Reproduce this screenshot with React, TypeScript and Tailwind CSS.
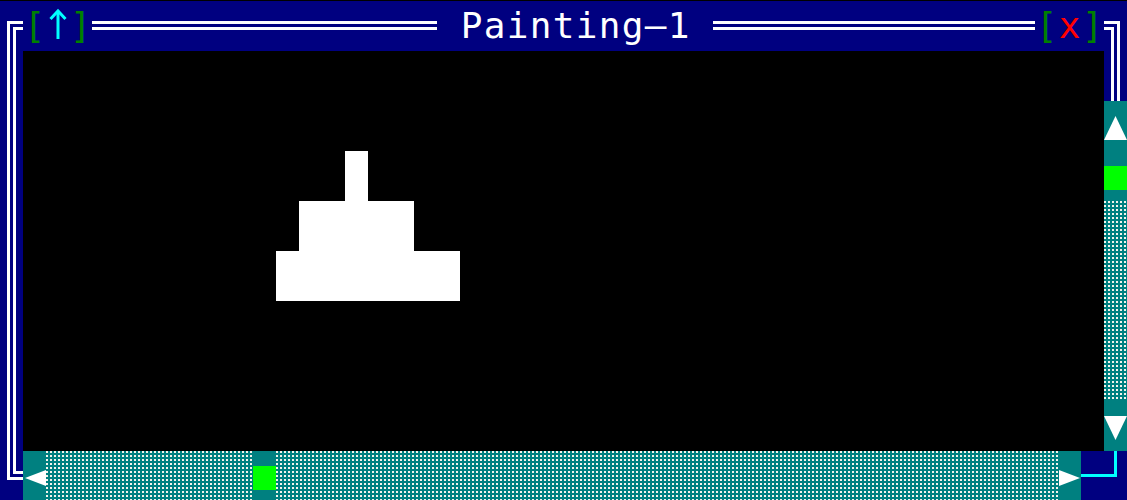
import React from "react";

const NAVY = "bg-[#000080]";

function Shade() {
  return (
    <div className="h-full w-full bg-[#f4f4ec] bg-[linear-gradient(to_bottom,transparent_2px,#008080_2px),linear-gradient(to_right,transparent_2px,#008080_2px)] bg-[size:4px_4px]" />
  );
}

function Ch({ c, color }: { c: string; color: string }) {
  return <div className={`text-center ${color}`}>{c}</div>;
}

function DoubleH({ span }: { span: string }) {
  return (
    <div className={span}>
      <div className="mt-[20px] h-[9px] border-y-[3px] border-white" />
    </div>
  );
}

function Glyph({ children, className = "" }: { children: React.ReactNode; className?: string }) {
  return (
    <svg width="23" height="50" viewBox="0 0 23 50" className={`block ${className}`}>
      {children}
    </svg>
  );
}

export default function App() {
  const title = "Painting—1".split("");
  return (
    <div className="h-[500px] w-[1127px] overflow-hidden bg-black pt-px">
      <div
        className={`grid grid-cols-[repeat(49,23px)] grid-rows-[repeat(10,50px)] ${NAVY} font-['DejaVu_Sans_Mono',monospace] text-[36px] leading-[50px] text-white`}
      >
        {/* Row 1: title bar */}
        <Glyph>
          <rect x="7" y="20" width="3" height="30" fill="#fff" />
          <rect x="7" y="20" width="16" height="3" fill="#fff" />
          <rect x="13" y="26" width="3" height="24" fill="#fff" />
          <rect x="13" y="26" width="10" height="3" fill="#fff" />
        </Glyph>
        <Ch c="[" color="text-[#008000]" />
        <div>
          <Glyph>
            <rect x="10.5" y="11" width="3" height="27" fill="#00ffff" />
            <polyline points="4.5,18 12,10 19.5,18" fill="none" stroke="#00ffff" strokeWidth="3" strokeLinejoin="miter" />
          </Glyph>
        </div>
        <Ch c="]" color="text-[#008000]" />
        <DoubleH span="col-span-15" />
        <div />
        {title.map((c, i) => (
          <Ch key={i} c={c} color="text-white" />
        ))}
        <div />
        <DoubleH span="col-span-14" />
        <Ch c="[" color="text-[#008000]" />
        <Ch c="x" color="text-[#ff0000]" />
        <Ch c="]" color="text-[#008000]" />
        <Glyph>
          <rect x="0" y="20" width="16" height="3" fill="#fff" />
          <rect x="13" y="20" width="3" height="30" fill="#fff" />
          <rect x="0" y="26" width="10" height="3" fill="#fff" />
          <rect x="7" y="26" width="3" height="24" fill="#fff" />
        </Glyph>

        {/* Left frame */}
        <div className="col-start-1 row-start-2 row-span-8">
          <div className="ml-[7px] h-full w-[9px] border-x-[3px] border-white" />
        </div>

        {/* Canvas */}
        <div className="col-start-2 col-span-47 row-start-2 row-span-8 grid grid-cols-[repeat(47,23px)] grid-rows-[repeat(8,50px)] bg-black">
          <div className="col-start-15 row-start-3 bg-white" />
          <div className="col-start-13 col-span-5 row-start-4 bg-white" />
          <div className="col-start-12 col-span-8 row-start-5 bg-white" />
        </div>

        {/* Right frame + vertical scrollbar */}
        <div className="col-start-49 row-start-2">
          <div className="ml-[7px] h-full w-[9px] border-x-[3px] border-white" />
        </div>
        <div className="col-start-49 row-start-3 bg-[#008080]">
          <Glyph>
            <polygon points="0,39 11.5,15 23,39" fill="#fff" />
          </Glyph>
        </div>
        <div className="col-start-49 row-start-4 bg-[#008080]">
          <div className="mt-[15px] h-[24px] bg-[#00ff00]" />
        </div>
        <div className="col-start-49 row-start-5 row-span-4">
          <Shade />
        </div>
        <div className="col-start-49 row-start-9 bg-[#008080]">
          <Glyph>
            <polygon points="0,15 23,15 11.5,39" fill="#fff" />
          </Glyph>
        </div>

        {/* Bottom row */}
        <div className="col-start-1 row-start-10">
          <Glyph>
            <rect x="7" y="0" width="3" height="29" fill="#fff" />
            <rect x="7" y="26" width="16" height="3" fill="#fff" />
            <rect x="13" y="0" width="3" height="23" fill="#fff" />
            <rect x="13" y="20" width="10" height="3" fill="#fff" />
          </Glyph>
        </div>
        <div className="col-start-2 row-start-10 bg-[#008080]">
          <Glyph>
            <polygon points="2,27 23,19 23,35" fill="#fff" />
          </Glyph>
        </div>
        <div className="col-start-3 col-span-9 row-start-10">
          <Shade />
        </div>
        <div className="col-start-12 row-start-10 bg-[#008080]">
          <div className="mt-[15px] h-[24px] bg-[#00ff00]" />
        </div>
        <div className="col-start-13 col-span-34 row-start-10">
          <Shade />
        </div>
        <div className="col-start-47 row-start-10 bg-[#008080]">
          <Glyph>
            <polygon points="1,19 22,27 1,35" fill="#fff" />
          </Glyph>
        </div>
        <div className="col-start-48 row-start-10">
          <Glyph>
            <rect x="0" y="23" width="23" height="3" fill="#00ffff" />
          </Glyph>
        </div>
        <div className="col-start-49 row-start-10">
          <Glyph>
            <rect x="10" y="0" width="3" height="26" fill="#00ffff" />
            <rect x="0" y="23" width="13" height="3" fill="#00ffff" />
          </Glyph>
        </div>
      </div>
    </div>
  );
}
